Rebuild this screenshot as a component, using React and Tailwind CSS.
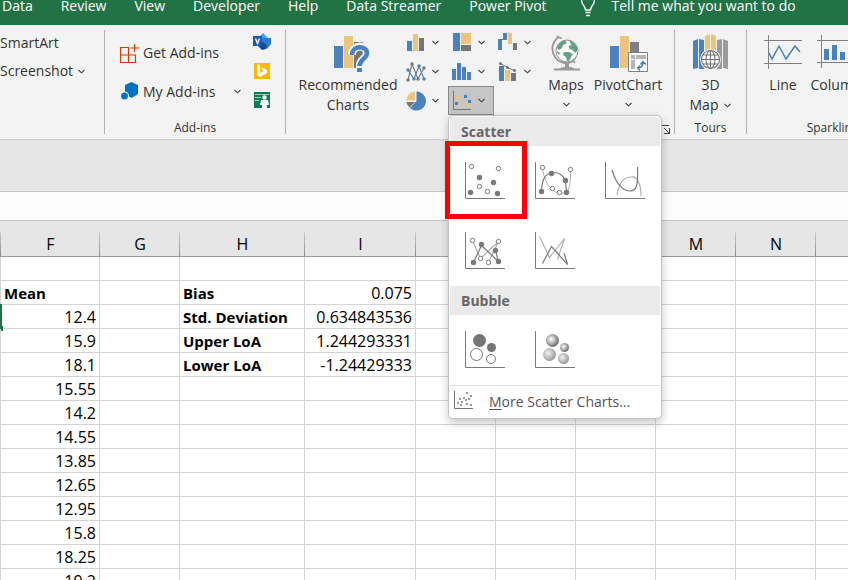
import React from "react";

const BLUE = "#4a82bb";
const TAN = "#ecc47e";
const GRAY = "#757575";

const tabs = ["Data", "Review", "View", "Developer", "Help", "Data Streamer", "Power Pivot"];

const columns = [
  { name: "", width: 1 },
  { name: "F", width: 99 },
  { name: "G", width: 80 },
  { name: "H", width: 125 },
  { name: "I", width: 111 },
  ..."JKLMNOPQRSTUVWXYZ".split("").map((name) => ({ name, width: 80 })),
];

const meanValues = ["12.4", "15.9", "18.1", "15.55", "14.2", "14.55", "13.85", "12.65", "12.95", "15.8", "18.25", "19.2"];
const summary = [
  ["Bias", "0.075"],
  ["Std. Deviation", "0.634843536"],
  ["Upper LoA", "1.244293331"],
  ["Lower LoA", "-1.24429333"],
];

const rows = [
  {},
  ...["Mean", ...meanValues].map((f, i) => ({
    F: f,
    H: summary[i] && summary[i][0],
    I: summary[i] && summary[i][1],
  })),
];

function Icon({ w, h, children, className = "" }) {
  return (
    <svg width={w} height={h} viewBox={`0 0 ${w} ${h}`} fill="none" aria-hidden="true" className={`shrink-0 ${className}`}>
      {children}
    </svg>
  );
}

function Chevron({ className = "" }) {
  return (
    <Icon w={7} h={5} className={className}>
      <path d="M0.5 1 3.5 3.8 6.5 1" stroke="#444" strokeWidth="1.1" />
    </Icon>
  );
}

/* ---------- small chart icons, 20 x 20 ---------- */

const ColumnIcon = () => (
  <Icon w={20} h={20}>
    <path fill={BLUE} d="M1 8h5v10H1z" />
    <path fill={TAN} d="M7 1h5v17H7z" />
    <path fill={GRAY} d="M13 5h5v13h-5z" />
  </Icon>
);

const TreemapIcon = () => (
  <Icon w={20} h={20}>
    <path fill={BLUE} d="M1 0h7v18H1z" />
    <path fill={TAN} d="M9 0h10v11H9z" />
    <path fill={GRAY} d="M9 12h10v6H9z" />
  </Icon>
);

const WaterfallIcon = () => (
  <Icon w={20} h={20}>
    <path fill={BLUE} d="M0 6h4v11H0zM5 0h4v7H5zM3 6h3v1H3z" />
    <path fill={TAN} d="M10 0h4v11h-4z" />
    <path fill={GRAY} d="M15 10h4v7h-4z" />
  </Icon>
);

const LineIcon = () => (
  <Icon w={20} h={20}>
    <path stroke={GRAY} strokeWidth="1.1" d="M2 18 6 2l6 15 6-11" />
    <path stroke={BLUE} strokeWidth="1.1" d="m2 8 6 9 5-13 5 13" />
    <g fill={GRAY}>
      <circle cx="2" cy="18" r="1.7" /><circle cx="6" cy="2" r="1.7" /><circle cx="12" cy="17" r="1.7" /><circle cx="18" cy="6" r="1.7" />
    </g>
    <g fill={BLUE}>
      <circle cx="2" cy="8" r="1.7" /><circle cx="8" cy="17" r="1.7" /><circle cx="13" cy="4" r="1.7" /><circle cx="18" cy="17" r="1.7" />
    </g>
  </Icon>
);

const HistogramIcon = () => (
  <Icon w={20} h={20}>
    <path fill={BLUE} d="M0 7h4v11H0zM5 1h4v17H5zM10 5h4v13h-4zM15 10h4v8h-4z" />
  </Icon>
);

const ComboIcon = () => (
  <Icon w={20} h={20}>
    <path fill={BLUE} d="M1 4h5v15H1z" />
    <path fill={TAN} d="M7 8h5v11H7z" />
    <path fill={GRAY} d="M13 11h5v8h-5z" />
    <path stroke={GRAY} d="m2.500 1.500 7 4 7 3" />
    <g fill={GRAY}>
      <circle cx="2.500" cy="1.500" r="1.500" /><circle cx="9.500" cy="5.500" r="1.500" /><circle cx="16.500" cy="8.500" r="1.500" />
    </g>
  </Icon>
);

const PieIcon = () => (
  <Icon w={20} h={20}>
    <path fill={BLUE} d="M10.500 .5A9.500 9.500 0 1 1 4 17L10.500 10z" />
    <path fill={TAN} d="M9 9.500V.5A9 9 0 0 0 0.500 9.500z" />
    <path fill={GRAY} d="M9 11H.5a9 9 0 0 0 3 5.500z" />
  </Icon>
);

const ScatterIcon = () => (
  <Icon w={20} h={20}>
    <path stroke="#757575" d="M1.500 0v18.500H19" />
    <path fill={BLUE} d="M12 4h3v3h-3zM3 11h3v3H3zM16 9h3v3h-3z" />
    <path fill={TAN} d="M4 5h3v3H4zM9 9h3v3H9zM14 13h3v3h-3z" />
  </Icon>
);

const chartButtons = [
  { label: "Column or bar chart", Art: ColumnIcon },
  { label: "Hierarchy chart", Art: TreemapIcon },
  { label: "Waterfall chart", Art: WaterfallIcon },
  { label: "Line or area chart", Art: LineIcon },
  { label: "Statistic chart", Art: HistogramIcon },
  { label: "Combo chart", Art: ComboIcon },
  { label: "Pie or doughnut chart", Art: PieIcon },
];

/* ---------- large ribbon icons ---------- */

const RecommendedIcon = () => (
  <Icon w={38} h={38} className="ml-2">
    <path fill={BLUE} d="M1 12h9v22H1z" />
    <path fill={TAN} d="M11 2h9v32h-9z" />
    <path fill={GRAY} d="M21 8h9v26h-9z" />
    <path stroke="#f3f3f3" strokeWidth="8" d="M19 21c0-11 15-11 15-2 0 6-7 6-7 12v7" />
    <path stroke={BLUE} strokeWidth="4.500" d="M19 21c0-10 15-10 15-2 0 6-7.500 6-7.500 13" />
    <path fill={BLUE} d="M24 34h5v4h-5z" />
  </Icon>
);

const GlobeIcon = () => (
  <Icon w={30} h={38}>
    <path stroke="#9a9a9a" strokeWidth="2" d="M8 3C1 7-.5 16 4 23c4 6 12 8 18 4" />
    <path stroke="#9a9a9a" strokeWidth="1.600" d="m6 2 2 1.500 3 1M20 28l2-1 3-4M22 26l2 3" />
    <circle cx="16" cy="17" r="11" fill="#fff" stroke="#8c8c8c" />
    <g fill="#62a087">
      <path d="M6 14c1-4 4-7 8-7.500l2 2.500-4 2-1 3-3 2z" />
      <path d="m18 6.500 4 1.500c3 3 4.500 5 4.500 8l-2 3-3-3-3-1-1-3 3-1z" />
      <path d="m13 18 5 0 4 2-2 3-2 4h-2l-1-4-3-2z" />
      <path d="m6 17 3 2-1 2c-1-1-2-2-2-4z" />
    </g>
    <path fill="#9a9a9a" d="M3 34.500h26v2H3zM9 34.500c1-1.500 4-1.500 5-1.500v-4h4v4c2 0 4 0 5 1.500z" />
  </Icon>
);

const PivotIcon = () => (
  <Icon w={40} h={39}>
    <path fill={BLUE} d="M2 12h9v22H2z" />
    <path fill={TAN} d="M12 2h9v32h-9z" />
    <path fill="#808080" d="M22 8h9v10h-9z" />
    <path fill="#fff" stroke="#808080" d="M20.500 18.500h19v19h-19z" />
    <path fill="#b5b5b5" d="M23 21h4v4h-4zM28 21h10v4H28zM23 26h4v9h-4z" />
    <path stroke={BLUE} strokeWidth="1.500" d="M30 34c4 0 5-3 5-6M32.500 30.500l2.500-3 3 3M32 31.500 29.500 34l2.500 2.500" />
  </Icon>
);

const MapIcon = () => (
  <Icon w={38} h={38}>
    <path fill={BLUE} d="m1 7 5-2v29l-5 1zM7 5l5 1v29H7z" />
    <path fill={TAN} d="m13 2 5-2v26h-5zM19 0l5 2v24h-5z" />
    <path fill="#9b9b9b" d="m25 6 5-1v30h-5zM31 5l5 2v28l-5-1z" />
    <circle cx="18.500" cy="25.500" r="10.500" fill="#f3f3f3" />
    <g stroke="#757575" strokeWidth="1.100">
      <circle cx="18.500" cy="25.500" r="9" fill="#fff" />
      <ellipse cx="18.500" cy="25.500" rx="4.500" ry="9" />
      <path d="M18.500 16.500v18M9.500 25.500h18M11 21h15M11 30h15" />
    </g>
  </Icon>
);

const SparkLineIcon = () => (
  <Icon w={38} h={38}>
    <path stroke="#808080" d="M0 6.500h38M0 29.500h38M4.500 1v34" />
    <path stroke={BLUE} strokeWidth="1.500" d="m5 19 3 6 7-13 7 13 9-13 5 6" />
  </Icon>
);

const SparkColumnIcon = () => (
  <Icon w={38} h={38}>
    <path stroke="#808080" d="M0 6.500h38M0 28.500h38M4.500 1v33" />
    <path fill={BLUE} d="M7 15h5v11H7zM15 11h5v15h-5zM23 18h5v8h-5zM31 13h5v13h-5z" />
  </Icon>
);

/* ---------- gallery thumbnails, 40 x 38 ---------- */

const Axes = () => <path stroke="#7a7a7a" d="M.5 0v36.500H40" />;

const Dots = ({ solid = [], open = [] }) => (
  <>
    {solid.map(([x, y]) => <circle key={`${x}-${y}`} cx={x} cy={y} r="2.700" fill="#7a7a7a" />)}
    {open.map(([x, y]) => <circle key={`${x}-${y}`} cx={x} cy={y} r="2.200" fill="#fff" stroke="#7a7a7a" />)}
  </>
);

const ScatterThumb = () => (
  <Icon w={40} h={38}>
    <Axes />
    <Dots solid={[[14.5, 15.5], [28.5, 20.5], [5.5, 30.5], [32.5, 31.5]]} open={[[6.5, 4.5], [33.5, 6.5], [14.5, 24.5], [22.5, 29.5]]} />
  </Icon>
);

const SmoothMarkersThumb = () => (
  <Icon w={40} h={38}>
    <Axes />
    <path stroke="#b0b0b0" d="M7.500 6C9 20 17 31 25 31c8 1 11-4 10.500-23" />
    <path stroke="#7a7a7a" strokeWidth="1.200" d="M6.500 29C7 14 12 11 19 10.500c5 0 9 3 11.500 8l1 12" />
    <Dots solid={[[6.5, 29.5], [16.5, 11.5], [30.5, 18.5], [31.5, 30.5]]} open={[[7.5, 5.5], [35.5, 7.5], [17.5, 26.5], [24.5, 30.5]]} />
  </Icon>
);

const SmoothThumb = () => (
  <Icon w={40} h={38}>
    <Axes />
    <path stroke="#b0b0b0" strokeWidth="1.200" d="M12 33c2-12 7-18 14-18 7-1 10 8 10 19" />
    <path stroke="#7a7a7a" strokeWidth="1.200" d="M7 8c5 17 13 21 18 21 8 0 8-10 7.500-24" />
  </Icon>
);

const LinesMarkersThumb = () => (
  <Icon w={40} h={38}>
    <Axes />
    <path stroke="#b0b0b0" strokeWidth="1.200" d="m7.500 8.500 8 18 18-17-10 21" />
    <path stroke="#7a7a7a" strokeWidth="1.200" d="m8.500 30.500 8-17 17 16-3-11" />
    <Dots solid={[[8.5, 30.5], [16.5, 12.5], [30.5, 18.5], [33.5, 29.5]]} open={[[7.5, 8.5], [33.5, 9.5], [15.5, 26.5], [23.5, 30.5]]} />
  </Icon>
);

const LinesThumb = () => (
  <Icon w={40} h={38}>
    <Axes />
    <path stroke="#b0b0b0" strokeWidth="1.200" d="m4.500 4.500 10 21 15-19-7 21" />
    <path stroke="#7a7a7a" strokeWidth="1.200" d="m7.500 31.500 9-17 16 18-3.500-11.500" />
  </Icon>
);

const BubbleThumb = () => (
  <Icon w={40} h={38}>
    <Axes />
    <circle cx="14.500" cy="9.500" r="6.500" fill="#757575" />
    <circle cx="26.500" cy="16.500" r="4.500" fill="#757575" />
    <circle cx="11.500" cy="23.500" r="6" fill="#fff" stroke="#757575" />
    <circle cx="26" cy="28" r="4.500" fill="#fff" stroke="#757575" />
  </Icon>
);

const Bubble3dThumb = () => (
  <Icon w={40} h={38}>
    <defs>
      <radialGradient id="ball-dark" cx="40%" cy="40%" r="60%">
        <stop offset="0" stopColor="#fff" />
        <stop offset="1" stopColor="#6e6e6e" />
      </radialGradient>
      <radialGradient id="ball-light" cx="40%" cy="40%" r="60%">
        <stop offset="0" stopColor="#f4f4f4" />
        <stop offset="1" stopColor="#999" />
      </radialGradient>
    </defs>
    <Axes />
    <circle cx="17.500" cy="9.500" r="6.500" fill="url(#ball-dark)" />
    <circle cx="29.500" cy="16.500" r="4.500" fill="url(#ball-dark)" />
    <circle cx="14.500" cy="23.500" r="6.500" fill="url(#ball-light)" />
    <circle cx="28.500" cy="27.500" r="5.500" fill="url(#ball-light)" />
  </Icon>
);

const scatterTypes = [
  { label: "Scatter", Art: ScatterThumb, marked: true },
  { label: "Scatter with smooth lines and markers", Art: SmoothMarkersThumb },
  { label: "Scatter with smooth lines", Art: SmoothThumb },
  { label: "Scatter with straight lines and markers", Art: LinesMarkersThumb },
  { label: "Scatter with straight lines", Art: LinesThumb },
];
const bubbleTypes = [
  { label: "Bubble", Art: BubbleThumb },
  { label: "3-D bubble", Art: Bubble3dThumb },
];

function Gallery({ title, items }) {
  return (
    <section>
      <h2 className="flex h-[29px] items-center bg-[#eaeaea] pl-[11px] text-sm font-bold text-[#666]">{title}</h2>
      <div className="grid grid-cols-3">
        {items.map(({ label, Art, marked }) => (
          <button key={label} aria-label={label} className="relative flex h-[70px] items-center justify-center">
            <Art />
            {marked && <span className="absolute -top-[5px] -right-[7px] -bottom-[3px] -left-[5px] z-10 border-[5px] border-[#fe0000]" />}
          </button>
        ))}
      </div>
    </section>
  );
}

function ScatterMenu() {
  return (
    <div className="absolute top-full left-0 z-20 w-[214px] rounded-[5px] border border-[#c3c3c3] bg-white p-px shadow-[0_4px_10px_rgba(0,0,0,0.22)]">
      <Gallery title="Scatter" items={scatterTypes} />
      <Gallery title="Bubble" items={bubbleTypes} />
      <button className="flex h-8 w-full items-center gap-[15px] border-t border-[#e0e0e0] pl-1 text-sm text-[#555]">
        <Icon w={20} h={20} className="mb-1">
          <path stroke="#757575" d="M.5 1v17.500H19" />
          <path fill="#757575" d="M5 8h2v2H5zM12 2h2v2h-2zM9 7h2v2H9zM16 5h2v2h-2zM3 12h2v2H3zM7 11h2v2H7zM11 9h2v2h-2zM14 8h2v2h-2zM6 14h2v2H6zM12 13h2v2h-2zM16 14h2v2h-2z" opacity=".75" />
        </Icon>
        <span><span className="underline underline-offset-2">M</span>ore Scatter Charts...</span>
      </button>
    </div>
  );
}

/* ---------- ribbon ---------- */

function Group({ label, className = "", children }) {
  return (
    <section className={`relative flex shrink-0 flex-col border-r border-[#b3b3b3] ${className}`}>
      <div className="flex flex-1">{children}</div>
      {label && <h2 className="text-center text-xs leading-3">{label}</h2>}
    </section>
  );
}

function BigButton({ art, lines, chevron, className = "" }) {
  return (
    <button className={`flex shrink-0 flex-col items-center pt-1 text-sm leading-5 ${className}`}>
      <span className="flex h-[41px] items-start">{art}</span>
      <span className="flex flex-col items-center">
        {lines.map((line, i) => (
          <span key={line} className="flex items-center gap-[6px] whitespace-nowrap">
            {line}
            {chevron === "inline" && i === lines.length - 1 && <Chevron />}
          </span>
        ))}
      </span>
      {chevron === "below" && <Chevron className="mt-[7px]" />}
    </button>
  );
}

function Ribbon() {
  return (
    <div className="flex h-[115px] shrink-0 border-b border-[#c8c8c8] bg-[#f3f3f3] py-[5px] text-sm text-[#333]">
      <Group className="w-[105px]">
        <div className="flex flex-col items-start">
          <button className="h-[26px]">SmartArt</button>
          <button className="flex h-[30px] items-center gap-[5px]">Screenshot <Chevron /></button>
        </div>
      </Group>

      <Group label="Add-ins" className="w-[181px]">
        <div className="flex flex-1 flex-col items-start pt-[3px] pl-[15px]">
          <button className="flex h-[39px] items-center gap-[3px]">
            <Icon w={20} h={20}>
              <path stroke="#d83b01" strokeWidth="1.200" d="M.5 4.500h8v15h-8zM.5 12h15M8.500 12h7v7.500h-7M14.500 1v8M10.500 5h9" />
            </Icon>
            Get Add-ins
          </button>
          <button className="flex h-[39px] items-center gap-[3px]">
            <Icon w={20} h={20}>
              <path fill="#0072c6" d="m11.500 0 6.500 3v9l-6.500 4L5 12V3z" />
              <circle cx="4.500" cy="14" r="4.500" fill="#f3f3f3" />
              <circle cx="4.500" cy="14" r="3.500" fill="#0072c6" />
            </Icon>
            My Add-ins <Chevron className="ml-[15px]" />
          </button>
        </div>
        <div className="flex flex-col gap-[9px] pt-[3px] pr-[13px]">
          <button aria-label="Visio data visualizer">
            <Icon w={20} h={20}>
              <path fill="#41a5ee" d="m11 0 5 5-5 6-5-6z" />
              <path fill="#2b7cd3" d="M11 5h8v6l-4 5-6-5z" />
              <path fill="#16498f" d="m9 8 6 4-1 4-4 1-4-4z" />
              <path fill="#185abd" d="M1 3h9v10H1z" />
              <path stroke="#fff" strokeWidth="1.400" d="m3.500 5.500 2 5 2-5" />
            </Icon>
          </button>
          <button aria-label="Bing maps">
            <Icon w={20} h={20}>
              <path fill="#ffb900" d="M2 1h16v16H2z" />
              <path fill="#fff" d="m5 2 3 1v8l4-2-2-1-1-3 6 3v3l-7 4-3-2z" />
            </Icon>
          </button>
          <button aria-label="People graph">
            <Icon w={20} h={20}>
              <path fill="#107c52" d="M2 1h16v16H2z" />
              <path stroke="#9fd0b8" d="M3 3.500h14M3 6.500h6M3 9.500h4" />
              <circle cx="12.500" cy="6.500" r="2.200" fill="#fff" />
              <path fill="#fff" d="M9 9h7l1 5h-2v3h-5v-3H8z" />
            </Icon>
          </button>
        </div>
      </Group>

      <Group className="w-[389px]">
        <BigButton art={<RecommendedIcon />} lines={["Recommended", "Charts"]} className="w-[116px] pl-2" />
        <div className="-mt-0.5 grid h-[87px] grid-cols-3 grid-rows-3 self-start">
          {chartButtons.map(({ label, Art }) => (
            <button key={label} aria-label={label} className="flex w-[46px] items-center gap-[6px] pl-1">
              <Art /> <Chevron />
            </button>
          ))}
          <div className="relative h-[29px]">
            <button aria-label="Scatter or bubble chart" aria-expanded="true" className="flex h-full w-[46px] items-center gap-[6px] border border-[#8a8a8a] bg-[#c6c6c6] pl-[3px]">
              <ScatterIcon /> <Chevron />
            </button>
            <ScatterMenu />
          </div>
        </div>
        <BigButton art={<GlobeIcon />} lines={["Maps"]} chevron="below" className="w-[52px]" />
        <BigButton art={<PivotIcon />} lines={["PivotChart"]} chevron="below" className="w-[72px]" />
        <button aria-label="Chart options" className="absolute right-1 bottom-0">
          <Icon w={9} h={9}>
            <path stroke="#444" d="M0 .5h8M3 3l5 5M8.500 3v5.500H3" />
          </Icon>
        </button>
      </Group>

      <Group label="Tours" className="w-[72px]">
        <BigButton art={<MapIcon />} lines={["3D", "Map"]} chevron="inline" className="w-full" />
      </Group>

      <Group label="Sparklines" className="w-[178px]">
        <BigButton art={<SparkLineIcon />} lines={["Line"]} className="ml-[13px] w-[46px]" />
        <BigButton art={<SparkColumnIcon />} lines={["Column"]} className="w-[60px]" />
      </Group>
    </div>
  );
}

/* ---------- worksheet ---------- */

function Sheet() {
  return (
    <div className="min-h-0 flex-1 overflow-hidden bg-white">
      <table className="w-[1776px] table-fixed border-separate border-spacing-0 text-base text-black">
        <colgroup>
          {columns.map((c) => <col key={c.name} style={{ width: c.width }} />)}
        </colgroup>
        <thead>
          <tr>
            {columns.map((c) => (
              <th
                key={c.name}
                scope="col"
                className="h-9 border-b border-[#9a9a9a] bg-[#e6e6e6] bg-[linear-gradient(#c8c8c8,#8e8e8e)] bg-[length:1px_24px] bg-right-bottom bg-no-repeat p-0 pt-3 text-center leading-[23px] font-normal"
              >
                {c.name}
              </th>
            ))}
          </tr>
        </thead>
        <tbody>
          {rows.map((row, r) => (
            <tr key={r}>
              {columns.map(({ name }) => {
                const value = row[name];
                const text = value && !/\d/.test(value);
                return (
                  <td
                    key={name}
                    className={`relative h-6 border-r border-b border-[#d4d4d4] pt-[2px] pb-0 leading-[21px] whitespace-nowrap ${name ? "px-[3px]" : "px-0"} ${text ? "text-left text-[15px] font-bold" : "text-right"}`}
                  >
                    {value}
                    {name === "F" && r === 2 && (
                      <>
                        <span className="absolute -top-px -left-px h-[22px] w-[2px] bg-[#217346]" />
                        <span className="absolute -bottom-[3px] -left-px h-[5px] w-[3px] bg-[#217346]" />
                      </>
                    )}
                  </td>
                );
              })}
            </tr>
          ))}
        </tbody>
      </table>
    </div>
  );
}

export default function App() {
  return (
    <div className="flex h-screen flex-col overflow-hidden bg-[#e6e6e6] font-['Open_Sans','Noto_Sans',sans-serif]">
      <nav className="flex h-[25px] shrink-0 items-start gap-7 bg-[#217346] pl-0.5 text-sm leading-3 whitespace-nowrap text-white">
        {tabs.map((t) => <button key={t}>{t}</button>)}
        <button className="ml-[5px] flex items-start gap-4">
          <Icon w={16} h={17}>
            <path stroke="#fff" strokeWidth="1.400" d="M1.500 0c0 5 4 6 4 10h5c0-4 4-5 4-10M5.500 12.500h5M6 15.500h4" />
          </Icon>
          Tell me what you want to do
        </button>
      </nav>
      <Ribbon />
      <div className="h-[51px] shrink-0" />
      <div className="h-[30px] shrink-0 border-y border-[#c4c4c4] bg-[#fdfdfd]" />
      <Sheet />
    </div>
  );
}
